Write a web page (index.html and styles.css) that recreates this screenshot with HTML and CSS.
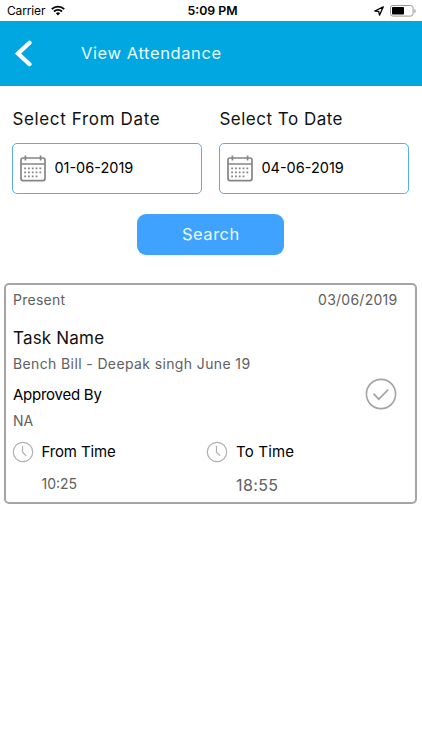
FILE: index.html
```html
<!DOCTYPE html>
<html lang="en">
<head>
    <meta charset="UTF-8">
    <meta name="viewport" content="width=device-width, initial-scale=1">
    <title>View Attendance</title>
    <link rel="stylesheet" href="styles.css">
</head>
<body>
    <div class="status-bar">
        <div class="status-left">
            <span class="carrier">Carrier</span>
            <svg class="wifi" width="14" height="11" viewBox="0 0 14 11">
                <path d="M0.8 4.1a9 9 0 0 1 12.4 0M3 6.5a5.8 5.8 0 0 1 8 0" fill="none" stroke="#000" stroke-width="1.9"/>
                <path d="M4.9 8.3a3 3 0 0 1 4.2 0L7 10.4z"/>
            </svg>
        </div>
        <span class="clock">5:09 PM</span>
        <div class="status-right">
            <svg width="10" height="10" viewBox="0 0 10 10">
                <path d="M9.3 0.8L0.8 5l3.9 0.4 0.8 3.8z" fill="none" stroke="#000" stroke-width="1.3" stroke-linejoin="round"/>
            </svg>
            <svg width="26" height="12" viewBox="0 0 26 12">
                <rect x="0.5" y="0.5" width="22.6" height="10.6" rx="2.4" fill="#fff" stroke="#999"/>
                <rect x="2" y="2" width="12" height="7.6" rx="0.8"/>
                <path d="M24.4 4v4a2.2 2.2 0 0 0 0-4z" fill="#999"/>
            </svg>
        </div>
    </div>

    <header class="navbar">
        <svg class="back" width="18" height="28" viewBox="0 0 18 28">
            <path d="M15.5 2.8L4 13.6l11.5 10.6" fill="none" stroke="#fff" stroke-width="4.2" stroke-linecap="round"/>
        </svg>
        <h1 class="title">View Attendance</h1>
    </header>

    <main>
        <div class="filters">
            <div class="field">
                <label class="field-label">Select From Date</label>
                <div class="date-box">
                    <svg class="calendar" width="26" height="27" viewBox="0 0 26 27">
                        <g fill="none" stroke="#858585">
                            <rect x="1" y="3" width="24" height="22.6" rx="2" stroke-width="1.7"/>
                            <path d="M1 9h24M5.4 0.5v5M20.6 0.5v5" stroke-width="1.7"/>
                            <path d="M4.2 13.3h18M4.2 17.3h18M4.2 21.3h14" stroke-dasharray="1.8 2" stroke-width="1.8"/>
                        </g>
                    </svg>
                    <span class="date">01-06-2019</span>
                </div>
            </div>
            <div class="field">
                <label class="field-label to-label">Select To Date</label>
                <div class="date-box">
                    <svg class="calendar" width="26" height="27" viewBox="0 0 26 27">
                        <g fill="none" stroke="#858585">
                            <rect x="1" y="3" width="24" height="22.6" rx="2" stroke-width="1.7"/>
                            <path d="M1 9h24M5.4 0.5v5M20.6 0.5v5" stroke-width="1.7"/>
                            <path d="M4.2 13.3h18M4.2 17.3h18M4.2 21.3h14" stroke-dasharray="1.8 2" stroke-width="1.8"/>
                        </g>
                    </svg>
                    <span class="date">04-06-2019</span>
                </div>
            </div>
        </div>

        <button class="search">Search</button>

        <div class="card">
            <div class="card-top">
                <span class="status">Present</span>
                <span class="card-date">03/06/2019</span>
            </div>
            <div class="task-label">Task Name</div>
            <div class="task">Bench Bill - Deepak singh June 19</div>
            <div class="approval">
                <div>
                    <div class="approved-label">Approved By</div>
                    <div class="approver">NA</div>
                </div>
                <svg class="check" width="32" height="32" viewBox="0 0 32 32">
                    <circle cx="16" cy="16" r="14.6" fill="none" stroke="#a3a3a3" stroke-width="1.6"/>
                    <path d="M8.5 15.7l5.3 5.5L23.3 11.5" fill="none" stroke="#a3a3a3" stroke-width="1.7"/>
                </svg>
            </div>
            <div class="times">
                <div class="time">
                    <svg class="time-icon" width="22" height="22" viewBox="0 0 22 22">
                        <circle cx="11" cy="11" r="9.7" fill="none" stroke="#b0b0b0" stroke-width="1.2"/>
                        <path d="M10.5 5v6.2l3.7 3.7" fill="none" stroke="#b0b0b0" stroke-width="1.2"/>
                    </svg>
                    <div>
                        <div class="time-label">From Time</div>
                        <div class="time-value">10:25</div>
                    </div>
                </div>
                <div class="time">
                    <svg class="time-icon" width="22" height="22" viewBox="0 0 22 22">
                        <circle cx="11" cy="11" r="9.7" fill="none" stroke="#b0b0b0" stroke-width="1.2"/>
                        <path d="M10.5 5v6.2l3.7 3.7" fill="none" stroke="#b0b0b0" stroke-width="1.2"/>
                    </svg>
                    <div>
                        <div class="time-label to-time">To Time</div>
                        <div class="time-value large">18:55</div>
                    </div>
                </div>
            </div>
        </div>
    </main>
</body>
</html>
```
FILE: styles.css
```css
* {
    box-sizing: border-box;
}
body {
    margin: 0;
    background: #fff;
    color: #111;
    font-family: Inter, "Liberation Sans", sans-serif;
}
svg {
    display: block;
    flex: none;
}
.status-bar {
    display: grid;
    grid-template-columns: 1fr auto 1fr;
    align-items: center;
    height: 21px;
    padding: 0 6px 0 7px;
    color: #000;
    font-size: 12px;
}
.status-left, .status-right {
    display: flex;
    align-items: center;
    gap: 6px;
}
.carrier {
    letter-spacing: -0.15px;
}
.status-right {
    justify-content: flex-end;
}
.clock {
    padding-left: 2px;
    font-weight: 600;
    font-size: 12.3px;
}
.navbar {
    display: flex;
    align-items: center;
    height: 65px;
    padding-left: 14px;
    background: #00a7e0;
}
.title {
    margin: 0 0 2px 49px;
    color: #e9fbff;
    font-size: 16.5px;
    font-weight: 400;
    letter-spacing: 0.6px;
}
.filters {
    display: grid;
    grid-template-columns: 190px 190px;
    column-gap: 17px;
    padding: 20px 0 0 12.4px;
}
.field-label {
    display: block;
    height: 37px;
    line-height: 26px;
    font-size: 17px;
    letter-spacing: 0.65px;
    white-space: nowrap;
}
.to-label {
    letter-spacing: 0.5px;
}
.date-box {
    display: flex;
    align-items: center;
    gap: 8px;
    height: 51px;
    padding-left: 7px;
    border: 1px solid #5aabf2;
    border-radius: 5px;
}
.date {
    color: #000;
    font-size: 14.5px;
    line-height: 18px;
    padding-bottom: 2px;
}
.search {
    display: block;
    width: 147px;
    height: 41px;
    margin: 20px 0 0 137.4px;
    padding: 0 0 2px;
    border: none;
    border-radius: 9px;
    background: #40a2ff;
    color: #e9f8ff;
    font-family: inherit;
    font-size: 16.5px;
    letter-spacing: 0.5px;
}
.card {
    width: 413px;
    height: 221px;
    margin: 28px 0 0 4.4px;
    padding: 5px 18px 0 6.6px;
    border: 2px solid #a5a5a5;
    border-radius: 5px;
}
.card-top {
    display: flex;
    justify-content: space-between;
    height: 34px;
    line-height: 20px;
    color: #606060;
    font-size: 14px;
    letter-spacing: 0.25px;
}
.task-label {
    height: 27px;
    line-height: 28px;
    font-size: 17px;
    letter-spacing: 0.2px;
}
.task {
    height: 27px;
    line-height: 26px;
    color: #606060;
    font-size: 14px;
    letter-spacing: 0.38px;
}
.approval {
    display: flex;
    justify-content: space-between;
    height: 62px;
}
.approved-label {
    height: 31px;
    line-height: 34px;
    color: #000;
    font-size: 15px;
    letter-spacing: -0.25px;
}
.approver {
    line-height: 24px;
    color: #606060;
    font-size: 14px;
}
.times {
    display: grid;
    grid-template-columns: 194.5px 1fr;
    margin: 1px 0 0 -1px;
}
.time {
    display: flex;
    gap: 7.5px;
}
.time-label {
    height: 22px;
    line-height: 22px;
    color: #000;
    font-size: 15px;
    letter-spacing: -0.15px;
}
.to-time {
    letter-spacing: 0.2px;
}
.time-value {
    height: 42px;
    line-height: 41px;
    color: #606060;
    font-size: 14px;
}
.large {
    line-height: 45px;
    font-size: 16px;
    letter-spacing: 0.4px;
}
```
